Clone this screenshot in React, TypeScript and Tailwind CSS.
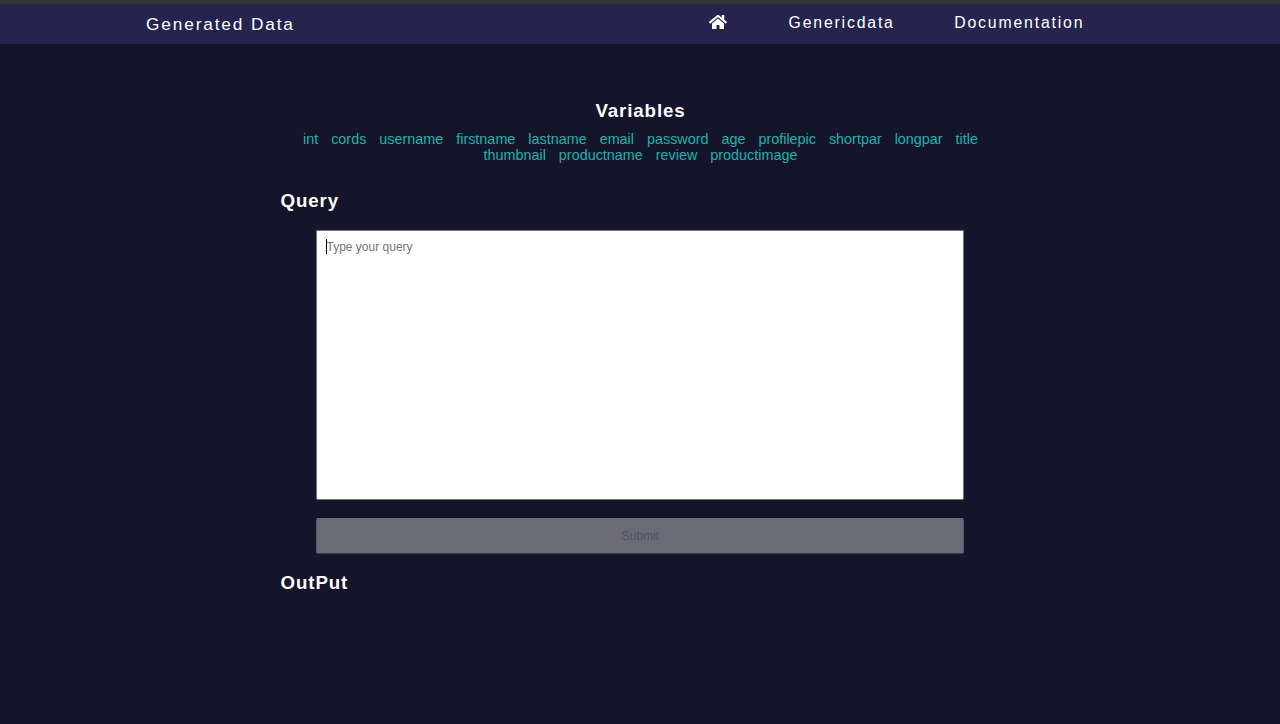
import { FaHome } from "react-icons/fa";

const rows = [
  ["int", "cords", "username", "firstname", "lastname", "email", "password", "age", "profilepic", "shortpar", "longpar", "title"],
  ["thumbnail", "productname", "review", "productimage"],
];

export default function App() {
  return (
    <div className="flex h-[724px] flex-col overflow-hidden bg-[#14142b] font-['Liberation_Sans',Arial,sans-serif] text-white">
      <div className="h-1 shrink-0 bg-[#333333]" />
      <header className="flex h-10 shrink-0 items-start bg-[#24244e] pl-[146px]">
        <h1 className="w-[563px] pt-[10px] text-[17.28px] leading-5 tracking-[1.85px]">Generated Data</h1>
        <nav className="flex pt-[9px] text-[15.84px] leading-5 tracking-[1.82px]">
          <a className="w-[79.5px]"><FaHome size={18} /></a>
          <a className="w-[165.7px]">Genericdata</a>
          <a>Documentation</a>
        </nav>
      </header>
      <main className="mx-auto w-[720px] pt-[56px]">
        <h2 className="pl-px text-center text-[18.72px] leading-[22px] font-bold tracking-[0.9px]">Variables</h2>
        <div className="mt-[9px] pl-px text-[14.4px] leading-4 text-[#20b2aa]">
          {rows.map((row, i) => (
            <div key={i} className="flex justify-center gap-[12.93px]">
              {row.map((v) => <span key={v}>{v}</span>)}
            </div>
          ))}
        </div>
        <h2 className="mt-[27px] pl-[0.5px] text-[18.72px] leading-[22px] font-bold tracking-[0.9px]">Query</h2>
        <div className="relative mx-auto mt-[18px] w-[648px]">
          <textarea
            placeholder="Type your query"
            className="block h-[270px] w-full resize-none rounded-b-[2px] border border-[#767676] bg-white px-[9.5px] py-[8px] text-[12px] leading-4 text-black outline-none placeholder:text-[#757575]"
          />
          <span className="absolute top-[9px] left-[10px] h-[15px] w-px bg-black" />
        </div>
        <button disabled className="mx-auto mt-[18px] block h-[36px] w-[648px] rounded-[2px] border border-t-[#6b6b78] border-x-[#565662] border-b-[#3b3b49] bg-[#6b6b78] pb-px pl-px text-[12px] text-[#51515f]">Submit</button>
        <h2 className="mt-[18px] pl-[0.5px] text-[18.72px] leading-[22px] font-bold tracking-[0.9px]">OutPut</h2>
      </main>
    </div>
  );
}
